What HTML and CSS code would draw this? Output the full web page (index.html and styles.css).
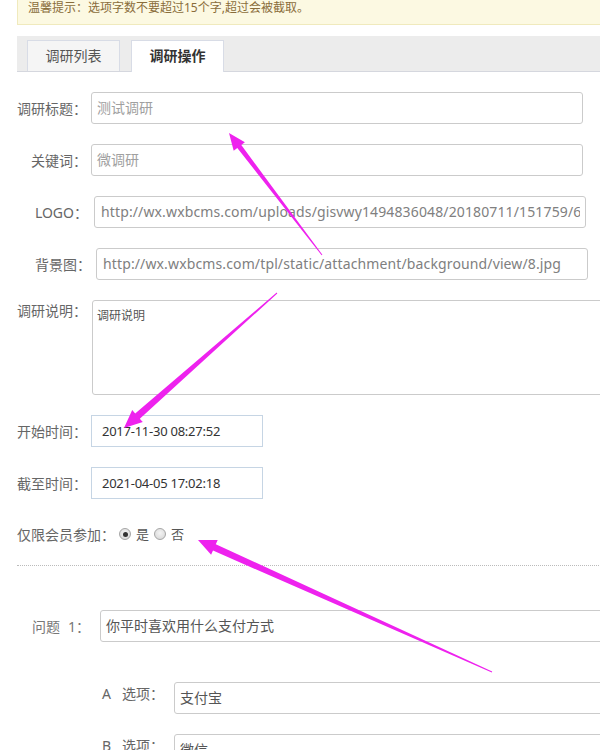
FILE: index.html
```html
<!DOCTYPE html>
<html lang="zh-CN">
<head>
<meta charset="utf-8">
<title>调研操作</title>
<link rel="stylesheet" href="styles.css">
</head>
<body>
<div class="page">
  <div class="notice">温馨提示：选项字数不要超过15个字,超过会被截取。</div>

  <div class="tabs">
    <div class="tab">调研列表</div>
    <div class="tab active">调研操作</div>
  </div>

  <div class="form">
    <div class="row">
      <div class="lbl">调研标题<span class="colon">：</span></div>
      <div class="field wide placeholder">测试调研</div>
    </div>
    <div class="row">
      <div class="lbl">关键词<span class="colon">：</span></div>
      <div class="field wide placeholder">微调研</div>
    </div>
    <div class="row">
      <div class="lbl lbl-logo">LOGO<span class="colon">：</span></div>
      <div class="field wide url"><span class="clip">http://wx.wxbcms.com/uploads/gisvwy1494836048/20180711/151759/6a8f2c0d.jpg</span></div>
    </div>
    <div class="row">
      <div class="lbl lbl-bg">背景图<span class="colon">：</span></div>
      <div class="field wide url"><span class="clip">http://wx.wxbcms.com/tpl/static/attachment/background/view/8.jpg</span></div>
    </div>
    <div class="row row-top">
      <div class="lbl lbl-area">调研说明<span class="colon">：</span></div>
      <div class="field area">调研说明</div>
    </div>
    <div class="row">
      <div class="lbl">开始时间<span class="colon">：</span></div>
      <div class="field date">2017-11-30 08:27:52</div>
    </div>
    <div class="row">
      <div class="lbl">截至时间<span class="colon">：</span></div>
      <div class="field date">2021-04-05 17:02:18</div>
    </div>
    <div class="row radio-row">
      <div class="lbl lbl-auto">仅限会员参加<span class="colon">：</span></div>
      <span class="radio checked"></span><span class="opt">是</span>
      <span class="radio"></span><span class="opt">否</span>
    </div>

    <div class="divider"></div>

    <div class="row question">
      <div class="lbl lbl-q">问题<span class="num">1</span><span class="colon">：</span></div>
      <div class="field long">你平时喜欢用什么支付方式</div>
    </div>
    <div class="row option row-top">
      <div class="lbl lbl-opt"><span class="letter">A</span>选项<span class="colon">：</span></div>
      <div class="field long">支付宝</div>
    </div>
    <div class="row option row-top">
      <div class="lbl lbl-opt"><span class="letter">B</span>选项<span class="colon">：</span></div>
      <div class="field long">微信</div>
    </div>
  </div>
</div>

<svg class="marks" width="600" height="750" viewBox="0 0 600 750" xmlns="http://www.w3.org/2000/svg">
  <polygon fill="#ee22ee" points="229,133 244.9,142.3 241.3,145.0 322.4,254.7 321.6,255.3 237.3,148.0 233.7,150.7"/>
  <polygon fill="#ee22ee" points="124,428 142.8,422.1 139.8,418.7 277.3,293.4 276.7,292.6 135.2,413.5 132.2,410.1"/>
  <polygon fill="#ee22ee" points="198,540 211.1,554.7 213.0,550.6 491.8,672.5 492.2,671.5 215.8,544.2 217.7,540.1"/>
</svg>
</body>
</html>
```

FILE: styles.css
```css
html, body {
  margin: 0;
  padding: 0;
  overflow: hidden;
  background: #fff;
}
body {
  position: relative;
  width: 600px;
  height: 750px;
  font-family: "Noto Sans", "Noto Sans CJK SC", sans-serif;
  color: #666;
}
.page {
  padding-left: 17px;
  width: 640px;
}
.notice {
  box-sizing: border-box;
  height: 25px;
  padding: 0 10px;
  font-size: 12px;
  line-height: 15px;
  color: #8a6d3b;
  background: #fcf9e2;
  border: 1px solid #f0eabd;
  border-top: none;
}
.tabs {
  margin-top: 11px;
  height: 35px;
  background: #ececec;
  border-bottom: 1px solid #d5d7de;
  display: flex;
  align-items: flex-end;
  gap: 11px;
  padding-left: 10px;
}
.tab {
  box-sizing: border-box;
  width: 93px;
  height: 31px;
  border: 1px solid #d8dce6;
  border-bottom: none;
  background: #f5f5f5;
  font-size: 14px;
  line-height: 30px;
  text-align: center;
  color: #555;
}
.tab.active {
  background: #fff;
  height: 32px;
  margin-bottom: -1px;
  color: #333;
  font-weight: bold;
}
.form {
  padding-top: 20px;
}
.row {
  display: flex;
  align-items: center;
  margin-bottom: 20px;
}
.row-top {
  align-items: flex-start;
}
.lbl {
  flex: none;
  box-sizing: border-box;
  width: 70px;
  margin-right: 4px;
  text-align: right;
  font-size: 14px;
  line-height: 20px;
  color: #666;
  white-space: nowrap;
}
.colon {
  font-family: "Noto Sans CJK TC", sans-serif;
}
.lbl-logo { width: 71px; margin-right: 6px; }
.lbl-bg { width: 74px; margin-right: 5px; }
.lbl-area { margin-right: 5px; }
.lbl-auto { width: auto; margin-right: 4px; }
.field {
  box-sizing: border-box;
  flex: none;
  height: 32px;
  border: 1px solid #cbcbcb;
  border-radius: 3px;
  padding: 0 5px;
  font-size: 14px;
  line-height: 30px;
  color: #555;
  white-space: nowrap;
  overflow: hidden;
}
.wide { width: 492px; }
.placeholder { color: #a0a0a0; }
.url {
  color: #808080;
  padding: 0 5px 0 6px;
  letter-spacing: 0.13px;
}
.clip {
  display: block;
  overflow: hidden;
}
.area {
  width: 540px;
  height: 95px;
  padding: 6px 4px;
  font-size: 12px;
  line-height: 18px;
  color: #555;
}
.date {
  width: 172px;
  border: 1px solid #c6d5e4;
  border-radius: 0;
  padding-left: 10px;
  font-size: 13px;
  letter-spacing: -0.25px;
  color: #333;
}
.radio-row {
  height: 30px;
  margin-bottom: 0;
}
.radio {
  box-sizing: border-box;
  width: 12px;
  height: 12px;
  border-radius: 50%;
  border: 1px solid #a5a5a5;
  background: radial-gradient(circle at 50% 40%, #f4f4f4, #d4d4d4);
  display: flex;
  align-items: center;
  justify-content: center;
  flex: none;
}
.radio.checked::after {
  content: "";
  width: 5px;
  height: 5px;
  border-radius: 50%;
  background: #333;
}
.opt {
  font-size: 13px;
  line-height: 20px;
  color: #555;
  margin: 0 5px 0 5px;
}
.opt:last-child { margin-right: 0; }
.divider {
  margin-top: 16px;
  height: 0;
  border-top: 1px dotted #bbb;
}
.question {
  margin-top: 44px;
  margin-bottom: 40px;
}
.lbl-q {
  width: 68px;
  margin-left: 15px;
  margin-right: 0;
  text-align: left;
  color: #777;
}
.num { margin-left: 8px; }
.long { width: 540px; }
.option .lbl-opt {
  width: 72px;
  margin-left: 85px;
  margin-right: 0;
  padding-top: 1px;
  text-align: left;
  color: #666;
}
.letter {
  display: inline-block;
  width: 20px;
}
.marks {
  position: absolute;
  left: 0;
  top: 0;
  pointer-events: none;
}
```
